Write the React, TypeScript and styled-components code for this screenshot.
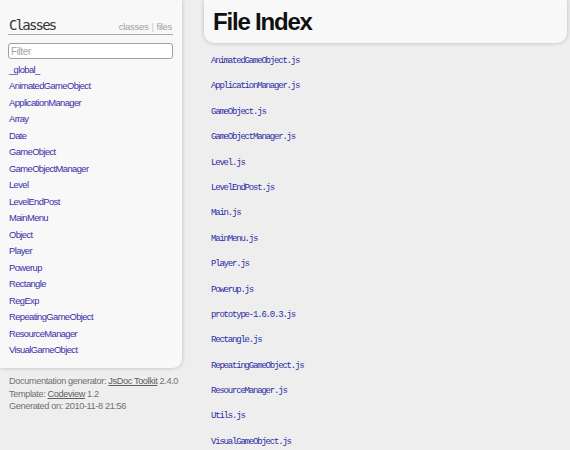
import React from "react";
import styled, { createGlobalStyle } from "styled-components";

const Global = createGlobalStyle`
  html, body { margin: 0; padding: 0; background: #eeeeee; }
  body { font-family: "Liberation Sans", Arial, sans-serif; }
  * { box-sizing: border-box; }
`;

const Page = styled.div`
  display: flex;
  align-items: flex-start;
  gap: 22px;
  width: 570px;
  height: 450px;
  overflow: hidden;
`;

const LeftColumn = styled.div`
  width: 182px;
  flex: none;
  display: flex;
  flex-direction: column;
`;

const Sidebar = styled.nav`
  background: #f8f8f8;
  border-bottom-right-radius: 9px;
  box-shadow: 0 0 4px rgba(0, 0, 0, 0.22);
  padding: 16px 9px 10px 8px;
`;

const SideHead = styled.div`
  display: flex;
  align-items: baseline;
  justify-content: space-between;
  border-bottom: 1px solid #a8a8a8;
  padding: 0 1px 1px 1px;
  height: 19px;
`;

const SideTitle = styled.h2`
  margin: 0;
  font-family: "DejaVu Sans Mono", "Liberation Mono", monospace;
  font-weight: normal;
  font-size: 14px;
  letter-spacing: -1.8px;
  color: #333;
  line-height: 18px;
`;

const Switch = styled.div`
  font-size: 9.5px;
  letter-spacing: -0.3px;
  color: #a0a0a0;
  display: flex;
  gap: 3px;
`;

const Sep = styled.span`
  color: #c8c8c8;
`;

const Filter = styled.input`
  display: block;
  margin-top: 8px;
  width: 165px;
  height: 16px;
  border: 1px solid #a0a0a0;
  border-radius: 3px;
  background: #fff;
  font-family: inherit;
  font-size: 10px;
  letter-spacing: -0.4px;
  padding: 0 2px;
  &::placeholder { color: #a5a5a5; }
`;

const ClassList = styled.ul`
  list-style: none;
  margin: 3px 0 0 0;
  padding: 0 0 0 1px;
`;

const ClassItem = styled.li`
  height: 16.47px;
  line-height: 16.47px;
  font-size: 9.4px;
  letter-spacing: -0.6px;
  color: #3a2ea8;
  white-space: nowrap;
`;

const Footer = styled.div`
  padding: 7px 0 0 9px;
  font-size: 9.2px;
  letter-spacing: -0.38px;
  line-height: 12.5px;
  color: #707070;
  white-space: nowrap;
`;

const FootLink = styled.span`
  text-decoration: underline;
  color: #606060;
`;

const Main = styled.main`
  flex: 1;
  margin-right: 3px;
  display: flex;
  flex-direction: column;
`;

const Header = styled.header`
  background: #f8f8f8;
  height: 43px;
  border-bottom-left-radius: 10px;
  border-bottom-right-radius: 10px;
  box-shadow: 0 0 4px rgba(0, 0, 0, 0.22);
  padding: 8px 9px 0 9px;
`;

const Title = styled.h1`
  margin: 0;
  font-family: "Liberation Sans", Arial, sans-serif;
  font-weight: bold;
  font-size: 24px;
  letter-spacing: -1.2px;
  line-height: 28px;
  color: #111;
`;

const FileList = styled.ul`
  list-style: none;
  margin: 6px 0 0 0;
  padding: 0 0 0 7px;
`;

const FileItem = styled.li`
  height: 25.4px;
  line-height: 25.4px;
  font-family: "Liberation Mono", monospace;
  font-size: 9px;
  letter-spacing: -1.2px;
  color: #2c2ca6;
  white-space: nowrap;
`;

const classes = [
  "_global_",
  "AnimatedGameObject",
  "ApplicationManager",
  "Array",
  "Date",
  "GameObject",
  "GameObjectManager",
  "Level",
  "LevelEndPost",
  "MainMenu",
  "Object",
  "Player",
  "Powerup",
  "Rectangle",
  "RegExp",
  "RepeatingGameObject",
  "ResourceManager",
  "VisualGameObject",
];

const files = [
  "AnimatedGameObject.js",
  "ApplicationManager.js",
  "GameObject.js",
  "GameObjectManager.js",
  "Level.js",
  "LevelEndPost.js",
  "Main.js",
  "MainMenu.js",
  "Player.js",
  "Powerup.js",
  "prototype-1.6.0.3.js",
  "Rectangle.js",
  "RepeatingGameObject.js",
  "ResourceManager.js",
  "Utils.js",
  "VisualGameObject.js",
];

export default function App() {
  return (
    <>
      <Global />
      <Page>
        <LeftColumn>
          <Sidebar>
            <SideHead>
              <SideTitle>Classes</SideTitle>
              <Switch>
                <span>classes</span>
                <Sep>|</Sep>
                <span>files</span>
              </Switch>
            </SideHead>
            <Filter placeholder="Filter" />
            <ClassList>
              {classes.map((c) => (
                <ClassItem key={c}>{c}</ClassItem>
              ))}
            </ClassList>
          </Sidebar>
          <Footer>
            <div>
              Documentation generator: <FootLink>JsDoc Toolkit</FootLink> 2.4.0
            </div>
            <div>
              Template: <FootLink>Codeview</FootLink> 1.2
            </div>
            <div>Generated on: 2010-11-8 21:56</div>
          </Footer>
        </LeftColumn>
        <Main>
          <Header>
            <Title>File Index</Title>
          </Header>
          <FileList>
            {files.map((f) => (
              <FileItem key={f}>{f}</FileItem>
            ))}
          </FileList>
        </Main>
      </Page>
    </>
  );
}
